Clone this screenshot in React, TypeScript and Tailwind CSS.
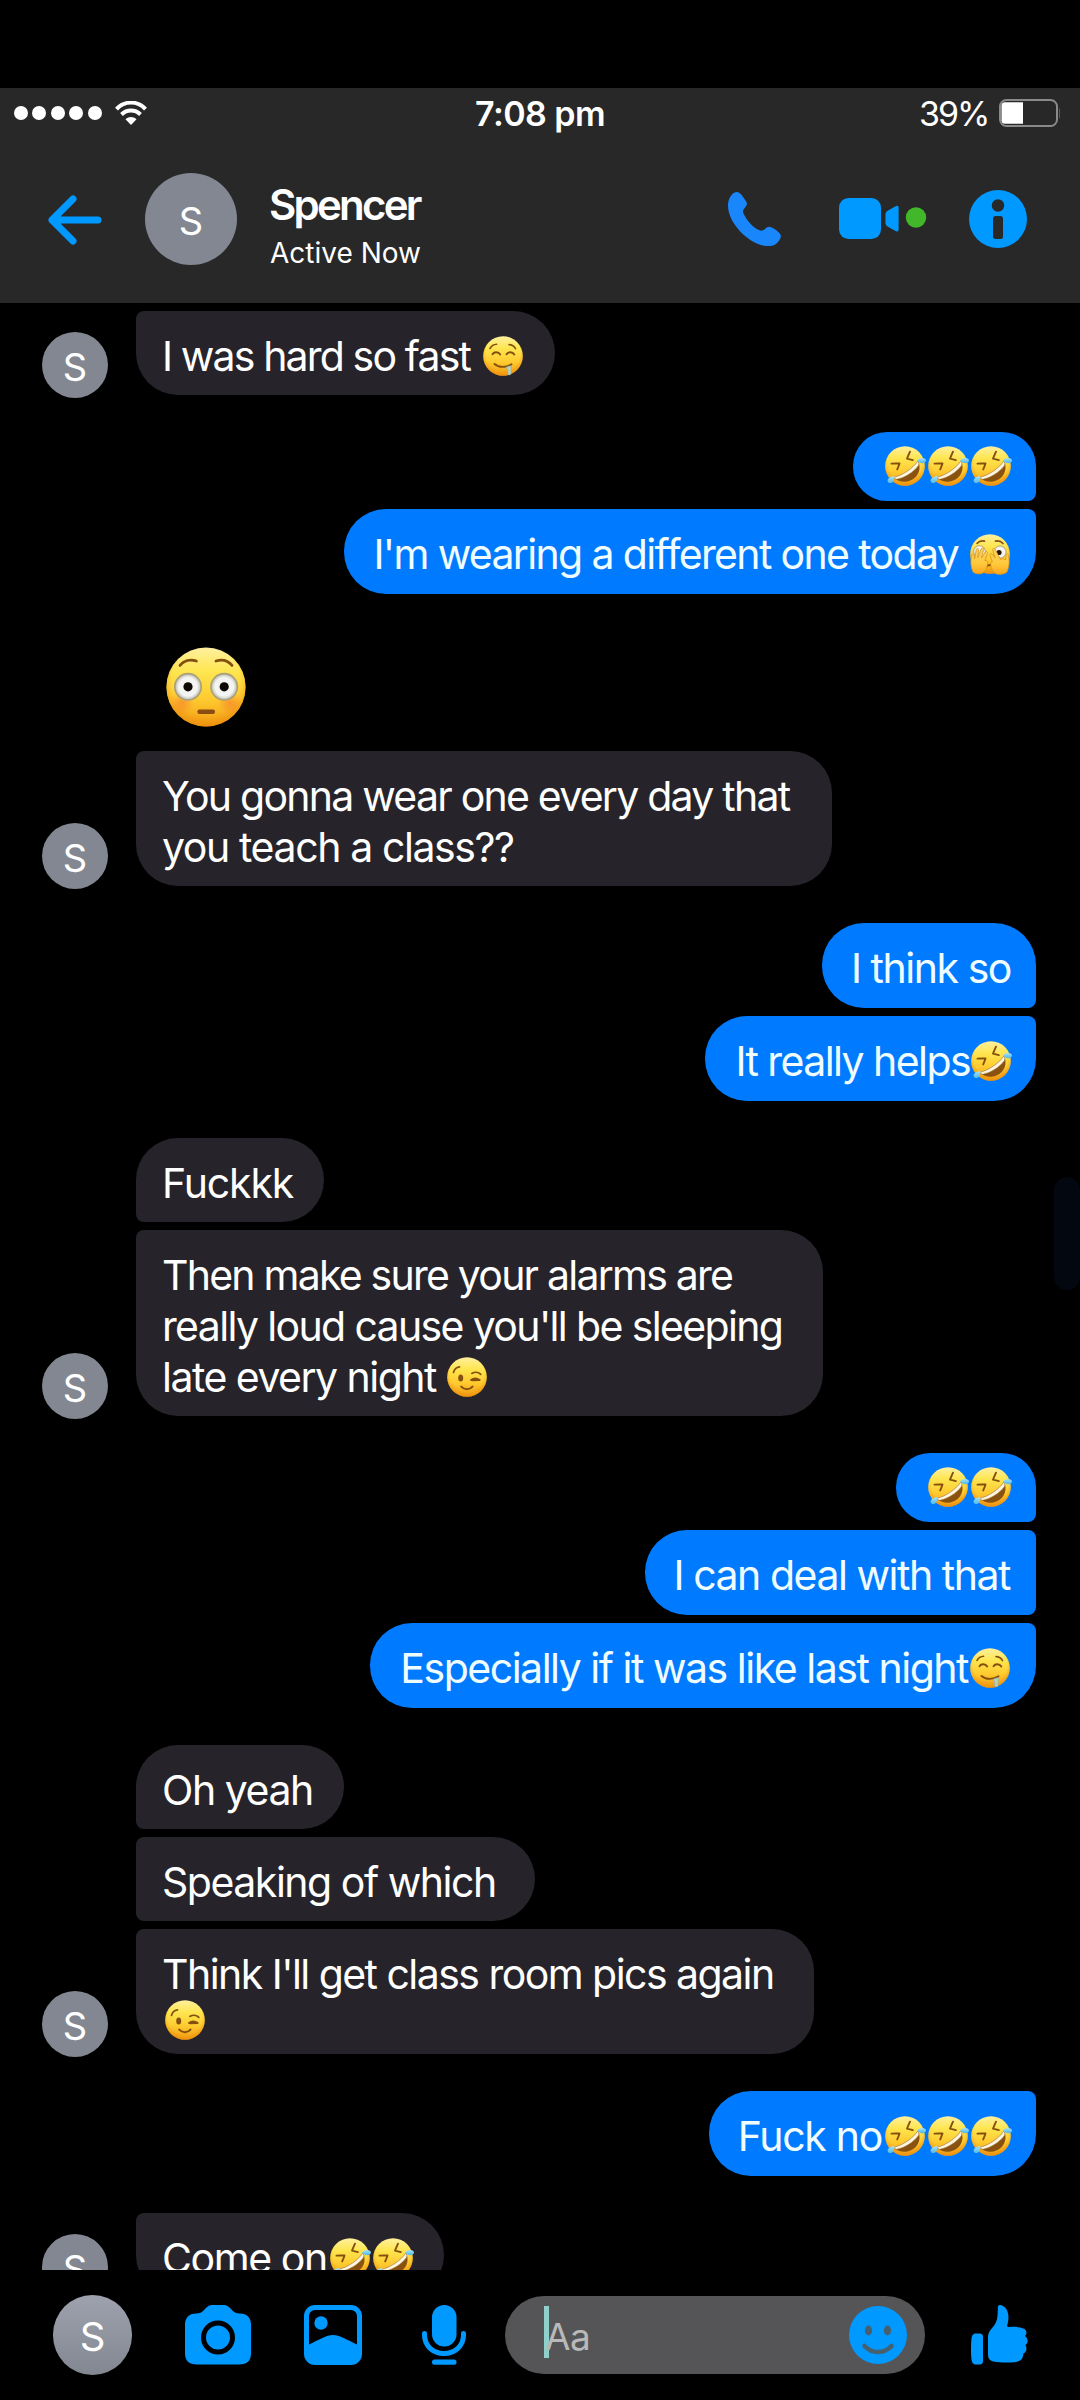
import React from "react";

type Face = "rofl" | "drool" | "wink" | "peek" | "flushed";

/* Shared gradients referenced by every emoji */
function Defs() {
  return (
    <svg className="absolute h-0 w-0" aria-hidden="true">
      <defs>
        <linearGradient id="face" x1="0" y1="0" x2="0" y2="1">
          <stop offset="0" stopColor="#fff0a0" />
          <stop offset="0.3" stopColor="#fee650" />
          <stop offset="0.65" stopColor="#fecb30" />
          <stop offset="1" stopColor="#f29a14" />
        </linearGradient>
        <radialGradient id="rim" cx="0.5" cy="0.42" r="0.6">
          <stop offset="0.72" stopColor="#f49a10" stopOpacity="0" />
          <stop offset="1" stopColor="#e98a0c" stopOpacity="0.8" />
        </radialGradient>
        <linearGradient id="tear" x1="0" y1="0" x2="0" y2="1">
          <stop offset="0" stopColor="#a5e4fa" />
          <stop offset="1" stopColor="#4fb8e6" />
        </linearGradient>
        <radialGradient id="blush">
          <stop offset="0" stopColor="#f4682c" stopOpacity="0.5" />
          <stop offset="1" stopColor="#f4682c" stopOpacity="0" />
        </radialGradient>
        <radialGradient id="eye">
          <stop offset="0.75" stopColor="#f4f4f2" />
          <stop offset="1" stopColor="#c4c3b8" />
        </radialGradient>
        <linearGradient id="hand" x1="0" y1="0" x2="0" y2="1">
          <stop offset="0" stopColor="#f6d468" />
          <stop offset="0.6" stopColor="#ffc93c" />
          <stop offset="1" stopColor="#fba61e" />
        </linearGradient>
      </defs>
    </svg>
  );
}

const brow = { fill: "none", stroke: "#85500f", strokeWidth: 1.6, strokeLinecap: "round" as const, strokeLinejoin: "round" as const };

function Disc() {
  return (
    <>
      <circle cx="20" cy="20" r="19.8" fill="url(#face)" />
      <circle cx="20" cy="20" r="19.8" fill="url(#rim)" />
    </>
  );
}

function Features({ face }: { face: Face }) {
  if (face === "rofl")
    return (
      <>
        <Disc />
        <path d="M6.500 17.600c3-.2 5.600-.1 8-.1-.6 2-1.400 3.900-2.300 5.900M25 5.700c-1.200 2.700-2.100 4.800-3 6.900 2 .5 3.900 1 5.900 1.500" {...brow} strokeWidth="1.900" />
        <path d="M8.500 31.500C17 29.500 27 23.500 33 14.800c2.600 5.500 2 12-2.600 16.500-6 5.700-14.800 6.300-21.900.2z" fill="#8a5210" />
        <path d="M8.500 31.500C17 29.500 27 23.500 33 14.800c1 2.200 1 3.500.3 4.900C28.500 26.200 20 31.500 11.600 33.300c-1.300-.4-2.200-.9-3.100-1.800z" fill="#fff6e2" stroke="#a0763a" strokeWidth=".5" />
        <path d="M32 14.500c2-2.700 5-3 7.500-2 1.700.8 2 2.600.6 3.700-2.100 1.600-5.500 1.300-8.100-1.700z" fill="url(#tear)" />
        <path d="M9.200 30c.6 3-.6 6-2.700 6.900-1.900.7-3.900-.3-3.900-2.400.1-2.300 3.200-4.100 6.600-4.500z" fill="url(#tear)" />
      </>
    );
  if (face === "drool")
    return (
      <>
        <Disc />
        <path d="M7 12.500c1.500-2.800 3.800-4 6.600-4.200M26 8.600c3 .1 5.200 1.500 6.500 4" {...brow} />
        <path d="M9.500 18.200c1.500-2.700 6-2.700 7.700.3M23.500 18.200c1.600-2.700 6-2.700 7.800.3" {...brow} strokeWidth="1.900" />
        <path d="M11.500 28c4.500 4 12 3.600 17 .2" {...brow} strokeWidth="1.900" />
        <path d="M23 31.500c1.500-1.300 4-1.900 5.600-1.500.3 2.500-.7 4.500-.5 7 .1 2.500-3.600 2.600-3.600.2 0-2 .3-3.800-1.500-5.700z" fill="#bccdb4" stroke="#88aaa6" strokeWidth=".6" />
      </>
    );
  if (face === "wink")
    return (
      <>
        <Disc />
        <path d="M6.500 15.500c.7-3.200 2.800-5.200 6-5.700M24.800 16.400c3-1.800 6.800-1.500 9 1" {...brow} strokeWidth="1.700" />
        <ellipse cx="13.700" cy="21" rx="2.500" ry="3.500" fill="#85500f" />
        <path d="M24 23c2.500-1.900 6-1.900 8.700 0l-7.500.2" {...brow} strokeWidth="1.900" />
        <path d="M14.200 29.600c3.300 3.500 8.300 3.500 11.300 0" {...brow} strokeWidth="2" />
      </>
    );
  if (face === "peek")
    return (
      <>
        <Disc />
        <path d="M7 9.500c2-2.300 4.600-3 7.500-2.400M25.500 7.100c3-.6 5.600.2 7.500 2.500" {...brow} />
        <circle cx="9.500" cy="17.500" r="6" fill="url(#eye)" stroke="#b59c50" strokeWidth=".6" />
        <circle cx="30" cy="18" r="6.200" fill="url(#eye)" stroke="#b59c50" strokeWidth=".6" />
        <circle cx="29" cy="18.500" r="2.600" fill="#241405" />
        <path d="M16.500 32.500c1.500-2 5.500-2 7 0" {...brow} strokeWidth="2" />
        <path d="M3 38c-2.500-6-2.600-11-1.300-16.500.6-2.200 2.500-1.900 2.500.3l.4 3.200 1.600-9c.6-2.300 2.700-1.900 2.400.5l-.8 7 3.400-8.500c1.100-2 3.100-1 2.400 1.200l-2.300 7.700 4-5.700c1.300-1.500 2.900-.3 2.100 1.500l-2.500 6.800c1.500-.3 3 .3 2.800 2.500-.5 4.500-2.200 8.500-5.200 10.200-3 1.200-7 .8-9.500-1.200z" fill="url(#hand)" stroke="#dc9418" strokeWidth=".8" />
        <path d="M37 38c2.500-6 2.600-11 1.500-16.500-.6-2.200-2.500-1.900-2.500.3l-.6 4.200-2.400-1.500-2.500 1-5.300-10c-1.100-2-3.100-1-2.400 1.200l2.300 7.200-3-3.700c-1.300-1.500-2.700-.3-2.100 1.500l2.500 6.300c-1.500-.3-2 .3-1.800 2.500.5 4.500 2 7.500 5 9.200 3.500 1.200 8.500.8 11.300-1.700z" fill="url(#hand)" stroke="#dc9418" strokeWidth=".8" />
      </>
    );
  return (
    <>
      <Disc />
      <circle cx="8" cy="28" r="6" fill="url(#blush)" />
      <circle cx="32" cy="28" r="6" fill="url(#blush)" />
      <path d="M7 9.200c1.800-2.300 5-3.200 8.200-2.200M25 7c3.200-1 6.200 0 8 2.200" {...brow} strokeWidth="1.400" />
      <circle cx="11" cy="19.900" r="7" fill="#a9a078" />
      <circle cx="29.100" cy="19.900" r="7" fill="#a9a078" />
      <circle cx="11" cy="19.900" r="6.200" fill="url(#eye)" />
      <circle cx="29.100" cy="19.900" r="6.200" fill="url(#eye)" />
      <circle cx="11" cy="19.900" r="2.300" fill="#0d0803" />
      <circle cx="29.100" cy="19.900" r="2.300" fill="#0d0803" />
      <rect x="15.700" y="31.200" width="8.800" height="2.300" rx="1" fill="#8a4c10" />
    </>
  );
}

const names: Record<Face, string> = { rofl: "🤣", drool: "🤤", wink: "😉", peek: "🫣", flushed: "😳" };

function Emoji({ face, big }: { face: Face; big?: boolean }) {
  return (
    <svg
      viewBox="-1 0 43 40"
      role="img"
      aria-label={names[face]}
      className={big ? "block h-[80px] w-[86px]" : "inline-block h-10 w-[43px] align-[-5px]"}
      overflow="visible"
    >
      <Features face={face} />
    </svg>
  );
}

function Avatar() {
  return (
    <div className="flex size-[66px] shrink-0 items-center justify-center rounded-full bg-[#838791] pt-[3px] text-[38px] leading-none">S</div>
  );
}

/* A run of received messages; the avatar sits beside the last bubble */
function Received({ className, children }: { className: string; children: React.ReactNode }) {
  return (
    <div className={`flex items-end pl-[42px] ${className}`}>
      <div className="-mb-[3px]"><Avatar /></div>
      <div className="ml-[28px] flex flex-col items-start gap-2">{children}</div>
    </div>
  );
}

function Sent({ className, children }: { className: string; children: React.ReactNode }) {
  return <div className={`flex flex-col items-end gap-2 pr-[44px] ${className}`}>{children}</div>;
}

function In({ className, children }: { className: string; children: React.ReactNode }) {
  return (
    <div className={`bg-[#26242a] pl-[26px] pt-5 pb-[13px] text-[41px] leading-[51px] whitespace-nowrap ${className}`}>{children}</div>
  );
}

function Out({ className, children }: { className: string; children: React.ReactNode }) {
  return (
    <div className={`flex h-[85px] items-start justify-end bg-[#007aff] pt-5 text-[41px] leading-[51px] whitespace-nowrap text-[#f0fdff] ${className}`}>
      <div>{children}</div>
    </div>
  );
}

function StatusBar() {
  return (
    <div className="flex h-[50px] items-center text-white">
      <div className="flex w-[475px] items-center pl-[14px]">
        <div className="flex gap-[4.400px]">
          {[0, 1, 2, 3, 4].map((i) => (
            <span key={i} className="size-[14px] rounded-full bg-white" />
          ))}
        </div>
        <svg viewBox="0 0 32 25" className="ml-[13px] h-[25px] w-8" fill="none" stroke="#fff">
          <path d="M1.500 8.200C9.500-.6 22.500-.6 30.500 8.200" strokeWidth="4" />
          <path d="M6.500 13.500c5.500-5.200 13.500-5.200 19 0" strokeWidth="4" />
          <path d="M10.500 18.200c3.500-2.900 7.500-2.900 11 0L16 24z" fill="#fff" stroke="none" />
        </svg>
      </div>
      <div className="w-[444px] text-[34px] font-semibold tracking-[-0.540px]">7:08 pm</div>
      <div className="w-[77px] text-[34px] tracking-[-2px]">39%</div>
      <svg viewBox="0 0 64 28" className="h-7 w-16">
        <rect x="4" y="1" width="57" height="26" rx="6.500" fill="none" stroke="#8a8a8a" strokeWidth="2" />
        <path d="M9 3.300h18v21.500H9a3.500 3.500 0 0 1-3.500-3.500V6.800A3.500 3.500 0 0 1 9 3.300z" fill="#fff" />
        <path d="M63.500 9v10.500c1.300-.8 1.600-2.500 1.600-5.200s-.3-4.500-1.600-5.300z" fill="#8a8a8a" />
      </svg>
    </div>
  );
}

function Header() {
  return (
    <header className="h-[215px] bg-[#282828]">
      <StatusBar />
      <div className="mt-[22px] flex h-[118px] items-center">
        <svg viewBox="0 0 54 50" className="ml-[48px] h-[50px] w-[54px] translate-y-px" fill="none" stroke="#0099ff" strokeWidth="7" strokeLinecap="round" strokeLinejoin="round">
          <path d="M25 4 4 25l21 21M4 25h46" />
        </svg>
        <div className="ml-[43px] flex size-[92px] items-center justify-center rounded-full bg-[#838791] pt-[3px] text-[38px] leading-none">S</div>
        <div className="ml-[32px] w-[459px] pt-[13px]">
          <div className="text-[42px] leading-[48px] font-semibold tracking-[-2.750px]">Spencer</div>
          <div className="mt-[7px] pl-[1px] text-[28px] leading-[34px]">Active Now</div>
        </div>
        <svg viewBox="0 0 54 54" className="-ml-px h-[54px] w-[54px] shrink-0" fill="#1a86fb">
          <path d="M1 13.500C1 6 5.500 0 10 0c3.500 0 6.500 5.500 9 9.200 1.400 2.300 1.100 3.600-.2 5.300-2.300 2.900-3.500 4-2.300 6.900C20 29 26.500 35.700 32.500 38.200c2.600 1 4 .1 5.500-1.200 2.200-2 4-2.800 6.700-1.500 3.300 1.700 6.300 3.700 8.400 6.500 1.600 2.300.4 5.300-2.100 8-3 3.300-5.500 4.100-9.500 4.100C23.500 54.100 1 32 1 13.500z" />
        </svg>
        <svg viewBox="0 0 88 42" className="ml-[58px] h-[42px] w-[88px] shrink-0" fill="#0099ff">
          <rect width="42" height="41" rx="9.500" />
          <path d="M57 8c1.400-.7 2.600.2 2.600 1.800v21.800c0 1.600-1.200 2.500-2.600 1.700l-8-4.500c-1.800-1-2.500-2.300-2.500-4.200v-8c0-2 .8-3.300 2.600-4.200z" />
          <circle cx="77" cy="19.500" r="10.200" fill="#42b72a" />
        </svg>
        <svg viewBox="0 0 58 58" className="ml-[42px] h-[58px] w-[58px] shrink-0">
          <circle cx="29" cy="29" r="29" fill="#0099ff" />
          <circle cx="29" cy="15.500" r="6.200" fill="#282828" />
          <rect x="24" y="26" width="10" height="23" rx="2.500" fill="#282828" />
        </svg>
      </div>
    </header>
  );
}

function Composer() {
  return (
    <footer className="flex h-[130px] items-center bg-black">
      <div className="ml-[53px] flex h-[80px] w-[79px] items-center justify-center rounded-full bg-gradient-to-b from-[#9da2ae] to-[#838791] pt-[3px] text-[40px] leading-none">S</div>
      <svg viewBox="0 0 66 60" className="ml-[53px] h-[60px] w-[66px]">
        <path d="M11 8.500c4 0 6.500-1.500 9-4.500C22.500 1.500 24 0 28 0h10c4 0 5.500 1.500 8 4 2.500 3 5 4.500 9 4.500 7 0 11 4.500 11 11V48c0 8-4 11.500-12 11.500H12C4 59.500 0 56 0 48V19.500c0-6.500 4-11 11-11z" fill="#0099ff" />
        <circle cx="33" cy="32.500" r="14.500" fill="#0099ff" stroke="#000" strokeWidth="5" />
      </svg>
      <svg viewBox="0 0 58 60" className="ml-[53px] h-[60px] w-[58px]">
        <rect x="2.500" y="2.500" width="53" height="55" rx="8.500" fill="#000" stroke="#0099ff" strokeWidth="5" />
        <path d="M4 40C16 34.500 22 30 29 30s13 4.500 25 10v11c0 4-2 6.500-6.500 6.500h-37C6 57.500 4 55 4 51z" fill="#0099ff" />
        <circle cx="17" cy="18" r="6.700" fill="#0099ff" />
      </svg>
      <svg viewBox="0 0 44 60" className="ml-[60px] h-[60px] w-[44px]" fill="#0099ff">
        <rect x="10" width="24.500" height="41.500" rx="12.250" />
        <path d="M2.500 28.500v1.500C2.500 41 11 48.500 22 48.500S41.500 41 41.500 30v-1.500" fill="none" stroke="#0099ff" strokeWidth="5" strokeLinecap="round" />
        <rect x="10" y="54.500" width="24.500" height="5.300" rx="2.500" />
      </svg>
      <div className="ml-[39px] flex h-[78px] w-[420px] items-center rounded-full bg-[#555557] pl-[40px]">
        <div className="relative flex items-center pt-[4px] text-[37px] text-[#b9b9ba]">
          <span className="absolute -top-[1px] -left-[1px] h-[52px] w-[5px] bg-[#8fd0cb]" />
          <span className="relative leading-[52px] tracking-[-0.500px]">Aa</span>
        </div>
        <svg viewBox="0 0 58 58" className="mr-[18px] ml-auto h-[58px] w-[58px]">
          <circle cx="29" cy="29" r="29" fill="#0099ff" />
          <ellipse cx="19.500" cy="24.500" rx="3.600" ry="5" fill="#46606f" />
          <ellipse cx="38.500" cy="24.500" rx="3.600" ry="5" fill="#46606f" />
          <path d="M15.500 40c7.500 8 19.500 8 27 0" fill="none" stroke="#46606f" strokeWidth="4.500" strokeLinecap="round" />
        </svg>
      </div>
      <svg viewBox="0 0 57 60" className="ml-[46px] h-[60px] w-[57px]" fill="#0099ff">
        <path d="M5 28.500h3.500c2.500 0 3.500 1.300 3.500 3.500v24c0 2.300-1 3.500-3.500 3.500H5c-3 0-4-1.500-4.500-5-.7-6-.7-15 0-21 .5-3.500 1.500-5 4.500-5z" />
        <path d="M27 1.500c.7-2.500 4-1.700 6.500.5 4.500 4 4.800 11.500 2.800 18-.3 1.300.2 2 1.500 2 7-.4 11.500-.2 15.200 1.800 3 1.700 3.200 5 1 7.200 3.300 2.500 3.400 7 .4 9 2 3.300 1.200 7-2 8.500 0 5-3 8.300-9 8.700-8 .6-16 .3-21-.8-4-.9-5.400-3-5.400-7.400v-17c0-4 1.700-6.500 4.500-9.500C26.500 17 26.500 12 26.700 7z" />
      </svg>
    </footer>
  );
}

const FIRST = "rounded-[42px] rounded-bl-[8px]";
const MIDDLE = "rounded-[42px] rounded-l-[8px]";
const LAST = "rounded-[42px] rounded-tl-[8px]";

export default function App() {
  return (
    <div className="relative flex h-[2400px] w-[1080px] flex-col overflow-hidden bg-black pt-[88px] font-['Inter',sans-serif] text-white">
      <Defs />
      <Header />
      <main className="h-[1967px] overflow-hidden pt-2">
        <Received className="">
          <In className={`h-[84px] w-[419px] ${LAST}`}>
            <span className="mr-[2px] tracking-[-1.850px]">I was hard so fast </span>
            <Emoji face="drool" />
          </In>
        </Received>

        <Sent className="mt-[37px]">
          <div className="flex h-[69px] w-[183px] items-start justify-end rounded-[34px] rounded-br-[8px] bg-[#007aff] pt-[14px] pr-[23px]">
            <Emoji face="rofl" /><Emoji face="rofl" /><Emoji face="rofl" />
          </div>
          <Out className="w-[692px] rounded-[42px] rounded-tr-[8px] pr-[24px]">
            <span className="mr-px tracking-[-1.650px]">I'm wearing a different one today </span>
            <Emoji face="peek" />
          </Out>
        </Sent>

        <div className="mt-[53px] ml-[164px]">
          <Emoji face="flushed" big />
        </div>

        <Received className="mt-[24px]">
          <In className={`w-[696px] ${LAST}`}>
            <div className="tracking-[-1.750px]">You gonna wear one every day that</div>
            <div className="tracking-[-1.400px]">you teach a class??</div>
          </In>
        </Received>

        <Sent className="mt-[37px]">
          <Out className="w-[214px] rounded-[42px] rounded-br-[8px] pr-[25px]">
            <span className="tracking-[-1.450px]">I think so</span>
          </Out>
          <Out className="w-[331px] rounded-[42px] rounded-tr-[8px] pr-[23px]">
            <span className="tracking-[-1.570px]">It really helps</span>
            <Emoji face="rofl" />
          </Out>
        </Sent>

        <Received className="mt-[37px]">
          <In className={`h-[84px] w-[188px] ${FIRST}`}>
            <span className="tracking-[-1.150px]">Fuckkk</span>
          </In>
          <In className={`w-[687px] ${LAST}`}>
            <div className="tracking-[-1.770px]">Then make sure your alarms are</div>
            <div className="tracking-[-1.640px]">really loud cause you'll be sleeping</div>
            <div>
              <span className="tracking-[-1.520px]">late every night </span>
              <Emoji face="wink" />
            </div>
          </In>
        </Received>

        <Sent className="mt-[37px]">
          <div className="flex h-[69px] w-[140px] items-start justify-end rounded-[34px] rounded-br-[8px] bg-[#007aff] pt-[14px] pr-[23px]">
            <Emoji face="rofl" /><Emoji face="rofl" />
          </div>
          <Out className="w-[391px] rounded-[42px] rounded-r-[8px] pr-[26px]">
            <span className="tracking-[-1.470px]">I can deal with that</span>
          </Out>
          <Out className="w-[666px] rounded-[42px] rounded-tr-[8px] pr-[24px]">
            <span className="mr-px tracking-[-1.480px]">Especially if it was like last night</span>
            <Emoji face="drool" />
          </Out>
        </Sent>

        <Received className="mt-[37px]">
          <In className={`h-[84px] w-[208px] ${FIRST}`}>
            <span className="tracking-[-1.450px]">Oh yeah</span>
          </In>
          <In className={`h-[84px] w-[399px] ${MIDDLE}`}>
            <span className="tracking-[-1.470px]">Speaking of which</span>
          </In>
          <In className={`h-[125px] w-[678px] ${LAST}`}>
            <div className="tracking-[-1.540px]">Think I'll get class room pics again</div>
            <div className="-mt-[5px] ml-[2px]"><Emoji face="wink" /></div>
          </In>
        </Received>

        <Sent className="mt-[37px]">
          <Out className="w-[327px] rounded-[42px] rounded-tr-[8px] pr-[23px]">
            <span className="mr-[2px] tracking-[-1.290px]">Fuck no</span>
            <Emoji face="rofl" /><Emoji face="rofl" /><Emoji face="rofl" />
          </Out>
        </Sent>

        <Received className="mt-[37px]">
          <In className={`h-[84px] w-[308px] ${LAST}`}>
            <span className="mr-[2px] tracking-[-1.410px]">Come on</span>
            <Emoji face="rofl" /><Emoji face="rofl" />
          </In>
        </Received>
      </main>
      <Composer />
      <div className="absolute top-[1177px] left-[1054px] h-[113px] w-[26px] rounded-full bg-[#020710]" />
    </div>
  );
}
